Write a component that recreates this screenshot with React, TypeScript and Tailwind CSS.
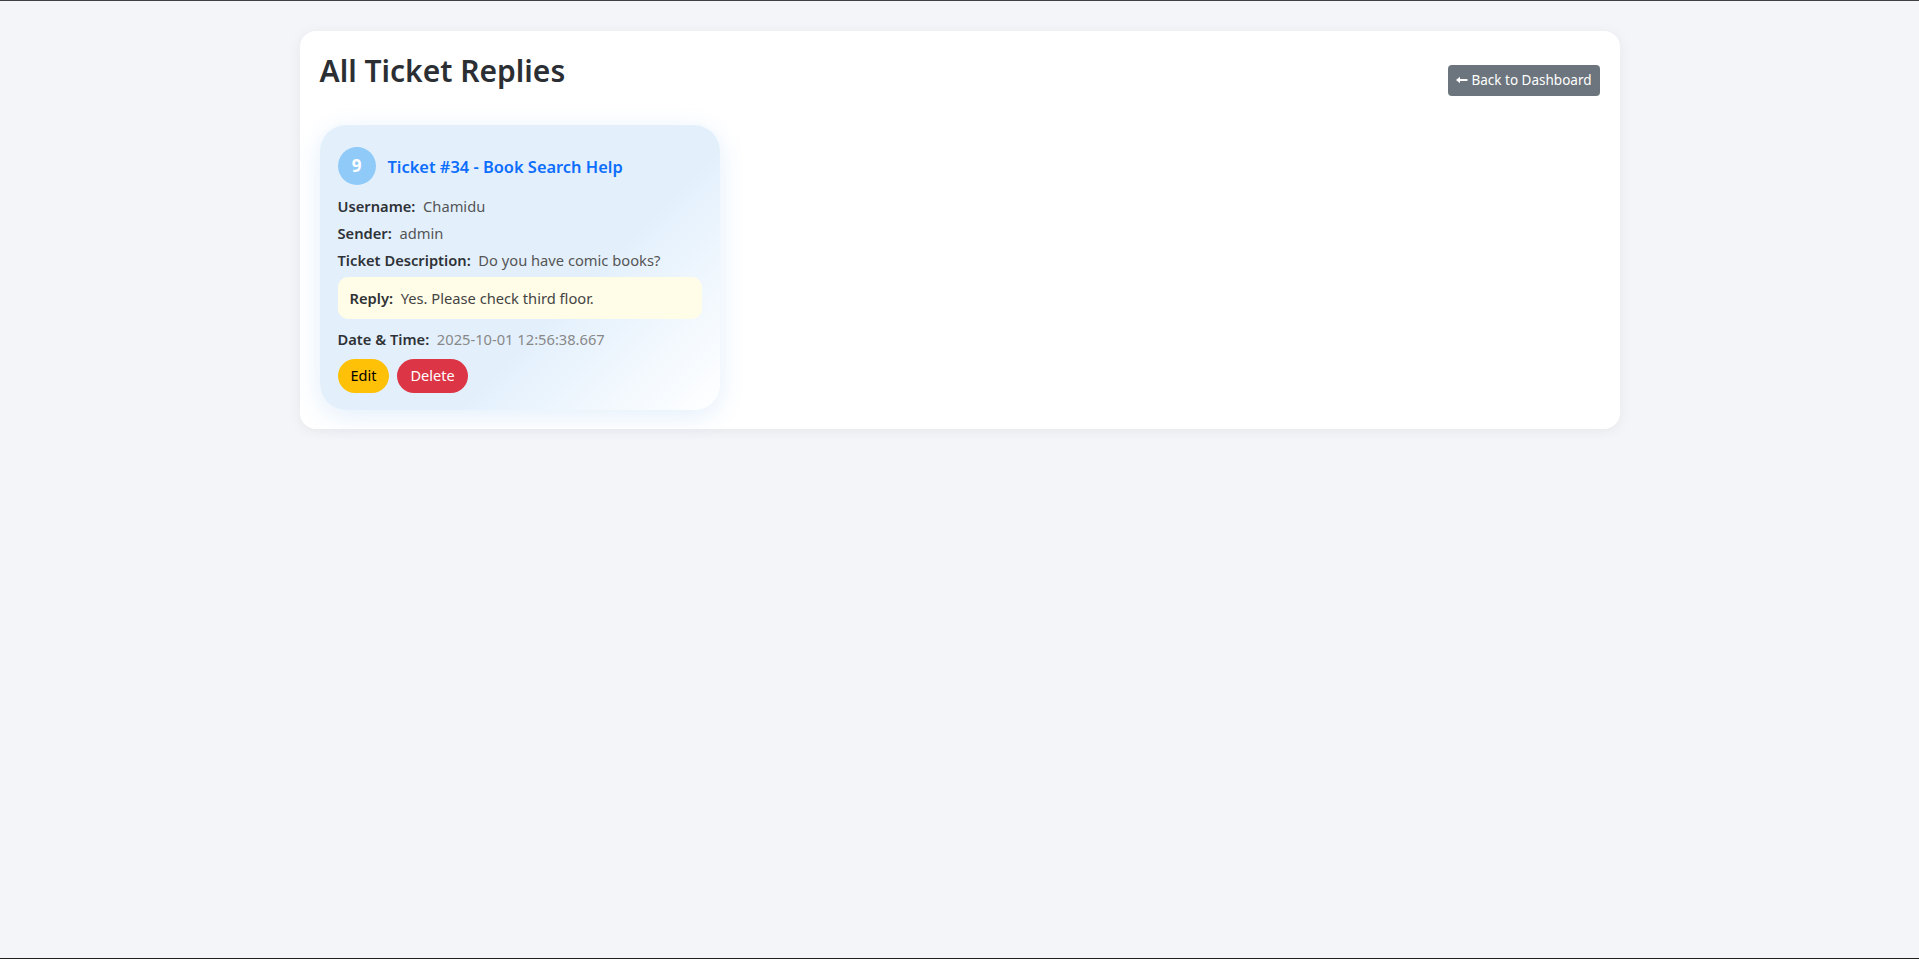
import React from "react";

export default function App() {
  return (
    <div
      className="h-[959px] w-full bg-[#f4f5f9] border-t border-t-[#3c4043] border-b border-b-[#1f1f1f] overflow-hidden"
      style={{ fontFamily: "'Noto Sans', 'Open Sans', sans-serif" }}
    >
      <div className="mx-auto mt-[30px] w-[1320px] rounded-[16px] bg-white px-[20px] pt-[20px] pb-[19px] shadow-[0_2px_14px_rgba(0,0,0,0.06)]">
        <div className="flex items-center justify-between mb-[28px]">
          <h2 className="text-[30px] leading-[46px] font-semibold text-[#2b2f33] -mt-[3px] mb-[3px]">All Ticket Replies</h2>
          <button className="mt-[12px] flex h-[31px] items-center rounded-[4px] bg-[#6c757d] px-[8px] text-[13.5px] text-white leading-[21px]">
            <svg width="12" height="8" viewBox="0 0 12 8" className="mr-[4px]">
              <path d="M11.5 4H2.5" stroke="white" strokeWidth="2" />
              <path d="M0 4L4 0.8V7.2Z" fill="white" />
            </svg>
            Back to Dashboard
          </button>
        </div>
        <div className="w-[400px] rounded-[26px] bg-[linear-gradient(135deg,#e3f0fc_0%,#e3f0fc_62%,#ffffff_100%)] px-[18px] pt-[22px] pb-[17px] shadow-[0_6px_26px_rgba(60,140,230,0.14)]">
          <div className="flex items-center mb-[10px]">
            <div className="flex h-[38px] w-[38px] items-center justify-center rounded-full bg-[#90caf9] text-[17px] font-bold text-white">
              9
            </div>
            <div className="ml-[12px] text-[16.4px] font-semibold text-[#0d6efd] mt-[2px]">Ticket #34 - Book Search Help</div>
          </div>
          <div className="text-[14.7px] leading-[22px] mb-[5px] text-[#555]">
            <span className="font-semibold text-[#2f3236]">Username:</span>&nbsp; Chamidu
          </div>
          <div className="text-[14.7px] leading-[22px] mb-[5px] text-[#555]">
            <span className="font-semibold text-[#2f3236]">Sender:</span>&nbsp; admin
          </div>
          <div className="text-[14.7px] leading-[22px] mb-[6px] text-[#555]">
            <span className="font-semibold text-[#2f3236]">Ticket Description:</span>&nbsp; Do you have comic books?
          </div>
          <div className="rounded-[10px] bg-[#fffde7] px-[12px] py-[10px] text-[14.7px] leading-[22px] text-[#444] mb-[9px]">
            <span className="font-semibold text-[#2f3236]">Reply:</span>&nbsp; Yes. Please check third floor.
          </div>
          <div className="text-[14.7px] leading-[22px] mb-[9px] text-[#888]">
            <span className="font-semibold text-[#2f3236]">Date &amp; Time:</span>&nbsp; 2025-10-01 12:56:38.667
          </div>
          <div className="flex gap-[8px]">
            <button className="h-[34px] rounded-full bg-[#ffc107] px-[13px] text-[14.5px] text-black">Edit</button>
            <button className="h-[34px] rounded-full bg-[#dc3545] px-[13px] text-[14.5px] text-white">Delete</button>
          </div>
        </div>
      </div>
    </div>
  );
}
